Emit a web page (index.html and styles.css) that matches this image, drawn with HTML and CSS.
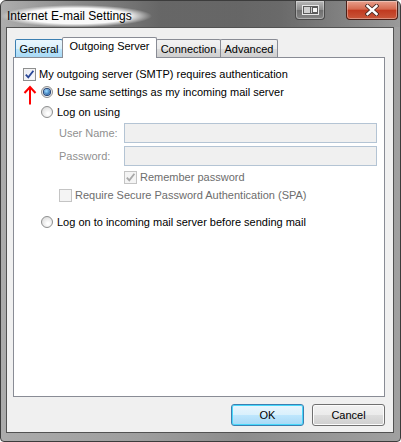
FILE: index.html
```html
<!DOCTYPE html>
<html>
<head>
  <title>Internet E-mail Settings</title>
  <meta charset="UTF-8"/>
  <link rel="stylesheet" href="styles.css">
</head>
<body>
<div class="window">
  <div class="titlebar">
    <span class="title">Internet E-mail Settings</span>
    <div class="caption">
      <div class="cap-btn mini">
        <svg width="17" height="10" viewBox="0 0 17 10">
          <rect x="0.5" y="0.5" width="16" height="9" fill="#5a5a5a" stroke="#e8e8e8"/>
          <rect x="2" y="2" width="6" height="6" fill="#d0d0d0"/>
          <line x1="9.5" y1="2" x2="9.5" y2="8" stroke="#d0d0d0"/>
          <rect x="11" y="3" width="4" height="4" fill="#f4f4f4"/>
        </svg>
      </div>
      <div class="cap-btn close">
        <svg width="14" height="12" viewBox="0 0 14 12">
          <path d="M2.5 2 L11.5 10 M11.5 2 L2.5 10" stroke="#4a2a24" stroke-width="4.2" stroke-linecap="square"/>
          <path d="M2.5 2 L11.5 10 M11.5 2 L2.5 10" stroke="#ffffff" stroke-width="2.4" stroke-linecap="square"/>
        </svg>
      </div>
    </div>
  </div>

  <div class="client">
    <div class="tabs">
      <div class="tab hot w-general">General</div>
      <div class="tab active w-outgoing">Outgoing Server</div>
      <div class="tab w-connection">Connection</div>
      <div class="tab w-advanced">Advanced</div>
    </div>

    <div class="panel">
      <svg class="arrow" width="14" height="20" viewBox="0 0 14 20">
        <path d="M7 19.5 V2.5 M1.5 8 L7 2 L12.5 8" fill="none" stroke="#ff0000" stroke-width="2"/>
      </svg>

      <div class="row first">
        <span class="check checked">
          <svg width="11" height="11" viewBox="0 0 11 11"><path d="M1.8 5.6 L4.3 8.4 L9.4 1.8" fill="none" stroke="#2a4796" stroke-width="1.8"/></svg>
        </span>
        <span>My outgoing server (SMTP) requires authentication</span>
      </div>

      <div class="row opt">
        <span class="radio on"></span>
        <span>Use same settings as my incoming mail server</span>
      </div>
      <div class="row opt gap2">
        <span class="radio"></span>
        <span>Log on using</span>
      </div>

      <div class="field user">
        <span class="label">User Name:</span>
        <span class="input"></span>
      </div>
      <div class="field">
        <span class="label">Password:</span>
        <span class="input"></span>
      </div>

      <div class="row remember">
        <span class="check disabled checked">
          <svg width="11" height="11" viewBox="0 0 11 11"><path d="M1.8 5.6 L4.3 8.4 L9.4 1.8" fill="none" stroke="#a9a9a9" stroke-width="1.8"/></svg>
        </span>
        <span class="dim">Remember password</span>
      </div>
      <div class="row spa">
        <span class="check disabled"></span>
        <span class="dim">Require Secure Password Authentication (SPA)</span>
      </div>

      <div class="row opt last">
        <span class="radio"></span>
        <span>Log on to incoming mail server before sending mail</span>
      </div>
    </div>

    <div class="actions">
      <button class="btn default">OK</button>
      <button class="btn">Cancel</button>
    </div>
  </div>
</div>
</body>
</html>
```

FILE: styles.css
```css
body{
  margin: 0;
  font-family: "Liberation Sans", Arial, sans-serif;
  font-size: 11px;
  color: #000;
  background: #fff;
}
.window{
  width: 401px;
  height: 442px;
  box-sizing: border-box;
  border: 1px solid #3c3c3c;
  border-radius: 6px 6px 4px 4px;
  background: linear-gradient(to right, #ababab 0%, #9e9e9e 35%, #8c8c8c 60%, #a0a0a0 100%);
  display: flex;
  flex-direction: column;
  overflow: hidden;
}
.titlebar{
  height: 26px;
  display: flex;
  align-items: flex-start;
  background: linear-gradient(to right, rgba(180,180,180,0.3), rgba(80,80,80,0.7) 40%, rgba(85,85,85,0.65) 70%, rgba(140,140,140,0.3));
}
.title{
  margin-top: 4px;
  padding: 4px 20px 4px 6px;
  font-size: 12px;
  color: #000;
  background: radial-gradient(closest-side, rgba(255,255,255,0.95) 70%, rgba(255,255,255,0) 100%);
}
.caption{
  margin-left: auto;
  margin-right: 2px;
  display: flex;
  gap: 21px;
}
.cap-btn{
  height: 18px;
  border: 1px solid #4a4a4a;
  border-top: none;
  border-radius: 0 0 4px 4px;
  display: flex;
  align-items: center;
  justify-content: center;
  box-shadow: inset 0 0 0 1px rgba(255,255,255,0.35);
}
.cap-btn.mini{
  width: 28px;
  background: linear-gradient(#b9b9b9, #8a8a8a 50%, #6f6f6f 51%, #858585);
}
.cap-btn.close{
  width: 50px;
  border-color: #4b1f17;
  background: linear-gradient(#e8a08d, #d66a50 45%, #c13a20 52%, #c9573a);
}
.client{
  flex: 1;
  margin: 0 6px 8px 5px;
  border: 1px solid #525252;
  background: #f0f0f0;
  padding: 9px 8px 6px 6px;
  display: flex;
  flex-direction: column;
}
.tabs{
  height: 20px;
  display: flex;
  align-items: flex-end;
  padding-left: 2px;
  position: relative;
  z-index: 1;
}
.tab{
  box-sizing: border-box;
  height: 18px;
  border: 1px solid #898c95;
  border-bottom: none;
  border-radius: 2px 2px 0 0;
  background: linear-gradient(#f2f2f2, #ebebeb 50%, #dddddd 51%, #cfcfcf);
  text-align: center;
  line-height: 18px;
  margin-right: -1px;
}
.tab.hot{
  border-color: #3c7fb1;
  background: linear-gradient(#eaf6fd, #d9f0fc 50%, #bee6fd 51%, #a7d9f5);
}
.tab.active{
  height: 21px;
  margin-bottom: -1px;
  background: #fff;
  line-height: 17px;
  z-index: 2;
  position: relative;
}
.w-general{ width: 48px; }
.w-outgoing{ width: 95px; }
.w-connection{ width: 65px; }
.w-advanced{ width: 58px; }

.panel{
  flex: 1;
  position: relative;
  background: #fff;
  border: 1px solid #898c95;
  padding: 7px 0 0 9px;
}
.arrow{
  position: absolute;
  left: 9px;
  top: 27px;
}
.row{
  height: 18px;
  display: flex;
  align-items: center;
  gap: 3px;
}
.row.opt{
  padding-left: 18px;
  gap: 4px;
}
.row.gap2{ margin-top: 2px; }
.row.last{ margin-top: 9px; padding-left: 18px; }
.row.remember{ margin-top: 2px; padding-left: 101px; }
.row.spa{ padding-left: 36px; }

.check{
  box-sizing: border-box;
  width: 13px;
  height: 13px;
  border: 1px solid #8e8f8f;
  background: linear-gradient(135deg, #dcdcdc, #fbfbfb);
  box-shadow: inset 0 0 0 1px #f4f4f4;
  display: flex;
  align-items: center;
  justify-content: center;
  flex: none;
}
.check.checked{
  background: linear-gradient(135deg, #e6e9f2, #fbfbfd);
}
.check.disabled{
  border-color: #c4c4c4;
  background: #f4f4f4;
}
.radio{
  box-sizing: border-box;
  width: 12px;
  height: 12px;
  border-radius: 50%;
  border: 1px solid #8e8f8f;
  background: radial-gradient(circle at 60% 65%, #ffffff 10%, #d8d8d8 90%);
  display: flex;
  align-items: center;
  justify-content: center;
  flex: none;
}
.radio.on::after{
  content: "";
  width: 6px;
  height: 6px;
  border-radius: 50%;
  background: radial-gradient(circle at 40% 35%, #8fd0fb 10%, #1d5c9f 80%);
  box-shadow: 0 0 0 1px #1f3f74;
}
.field{
  margin-top: 3px;
  height: 20px;
  display: flex;
  align-items: center;
  padding-left: 36px;
}
.field.user{ margin-top: 2px; }
.label{
  width: 65px;
  color: #909090;
}
.input{
  box-sizing: border-box;
  width: 253px;
  height: 20px;
  border: 1px solid #b4c4d4;
  background: #f0f0f0;
}
.dim{
  color: #6d6d6d;
}
.actions{
  margin-top: 7px;
  display: flex;
  justify-content: flex-end;
  gap: 8px;
}
.btn{
  font-family: "Liberation Sans", Arial, sans-serif;
  font-size: 11px;
  width: 73px;
  height: 22px;
  padding: 0;
  color: #000;
  border: 1px solid #707070;
  border-radius: 3px;
  background: linear-gradient(#f2f2f2, #ebebeb 50%, #dddddd 51%, #cfcfcf);
  box-shadow: inset 0 0 0 1px #fcfcfc;
}
.btn.default{
  border-color: #3c7fb1;
  background: linear-gradient(#eaf6fd, #d9f0fc 50%, #bee6fd 51%, #a7d9f5);
  box-shadow: inset 0 0 0 1px #48d8fb;
}
```
